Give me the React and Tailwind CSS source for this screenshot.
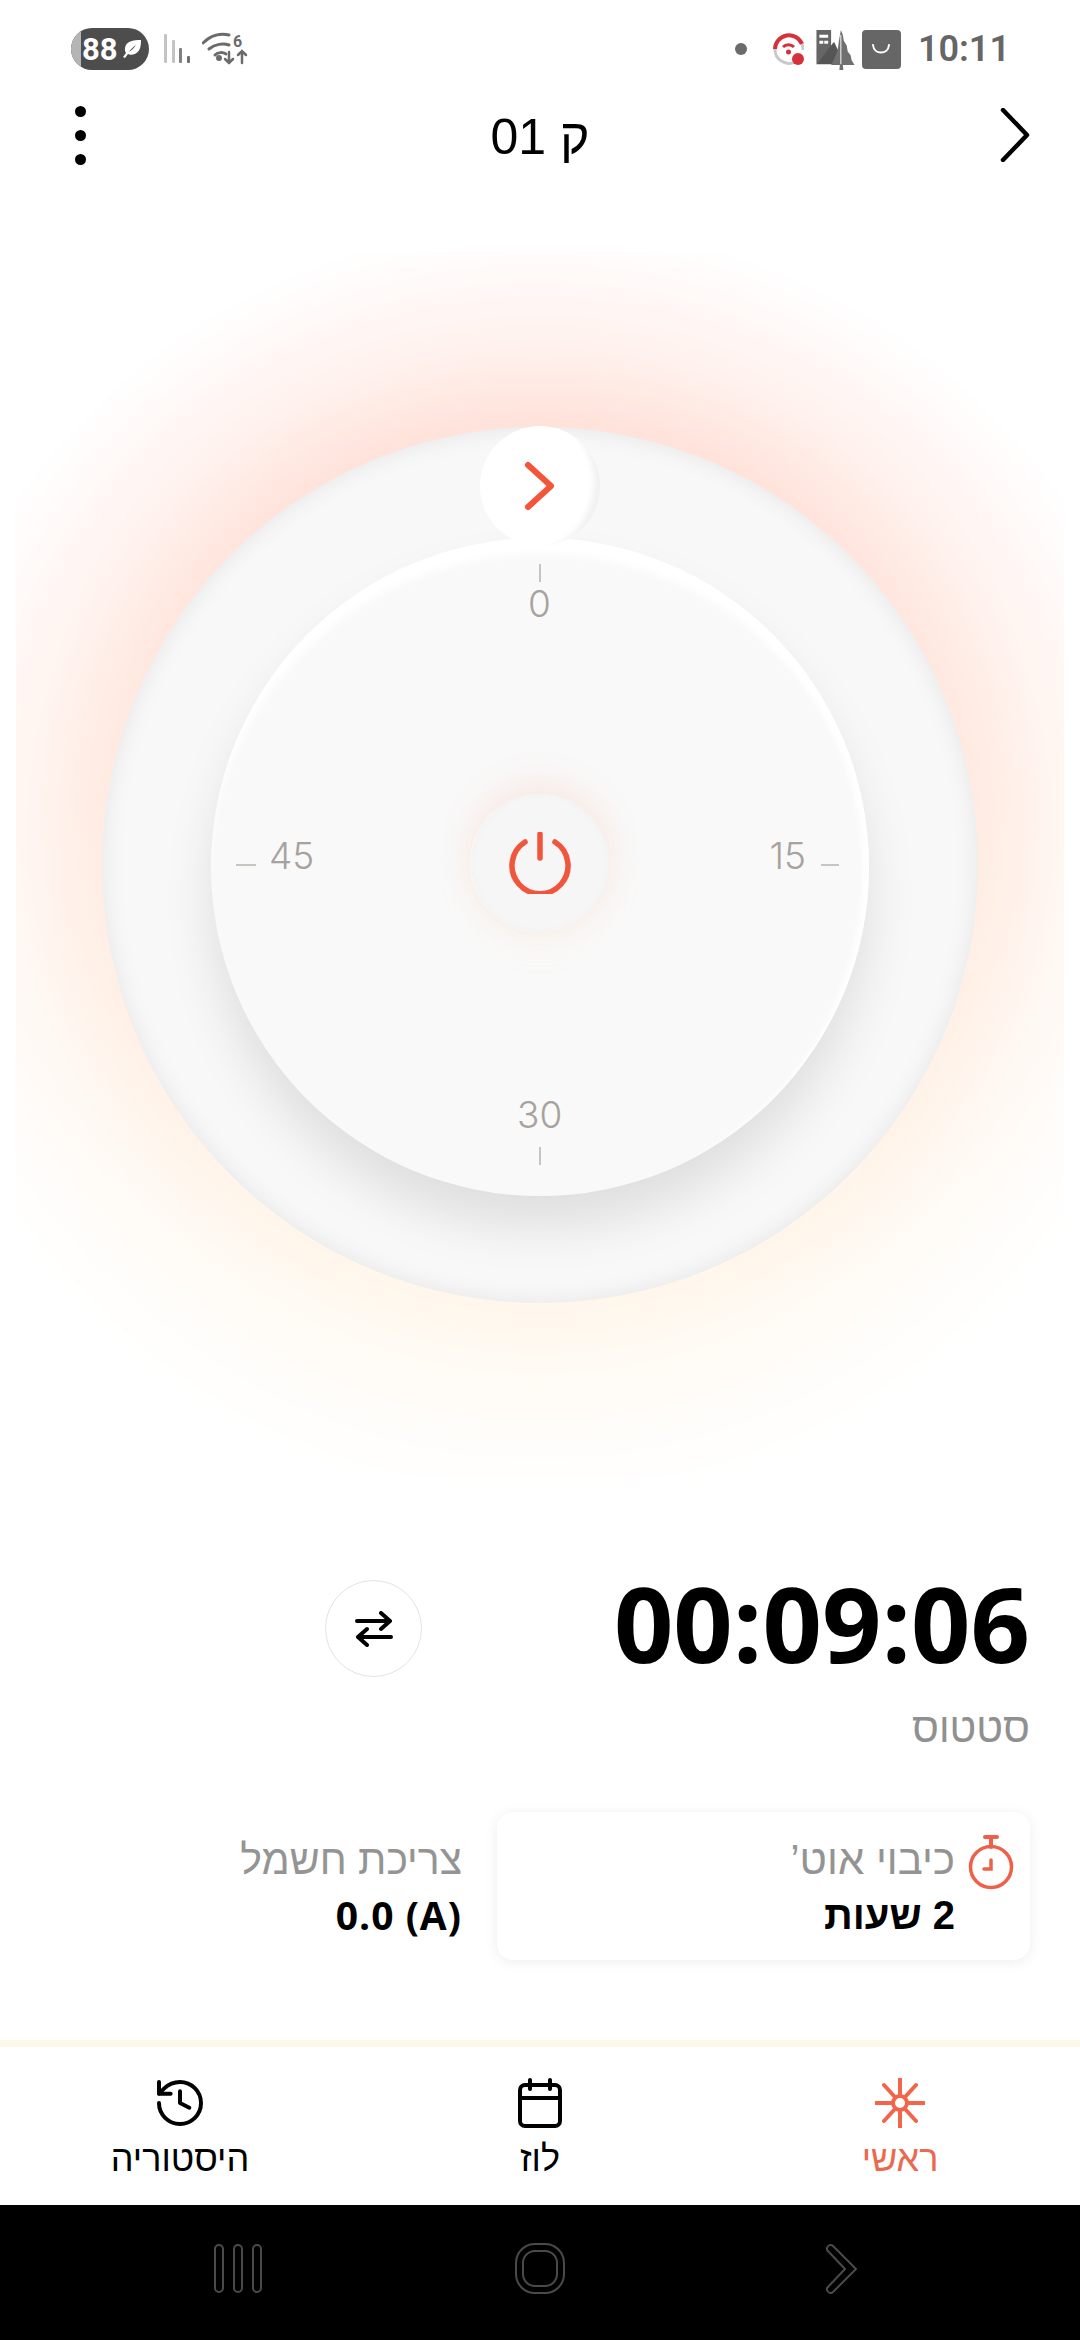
import { History } from 'lucide-react';

const hebrew = "font-['Liberation_Sans','DejaVu_Sans',sans-serif]";

function Leaf() {
  return (
    <svg viewBox="0 0 24 24" className="w-[24px] h-[24px]" fill="#fff">
      <path d="M21 3c-8 0-15 1-16 8-.4 2.500.4 4 1 5l-3 4 2 1 3-4c1 .6 3 1 5 .4C20 16 21 10 21 3zM9 15c2-3 4-5 7-7-2 3-4 5-7 7z" />
    </svg>
  );
}

function SignalBars() {
  return (
    <svg viewBox="0 0 26 30" className="w-[26px] h-[30px]">
      <rect x="0" y="0" width="3" height="29" rx="1" fill="#c4c4c4" />
      <rect x="8" y="6" width="3" height="23" rx="1" fill="#c4c4c4" />
      <rect x="15" y="14" width="3" height="15" rx="1" fill="#808080" />
      <rect x="23" y="22" width="3" height="7" rx="1" fill="#707070" />
    </svg>
  );
}

function WifiIcon() {
  return (
    <svg viewBox="0 0 50 34" className="w-[50px] h-[34px]" fill="none" stroke="#6b6b6b" strokeWidth="3" strokeLinecap="round">
      <path d="M1 11c8-8 18-10 26-8" />
      <path d="M7 17c6-5 14-6 20-4" />
      <path d="M13 23c3-3 8-3 11-1" />
      <circle cx="17" cy="26" r="1.500" fill="#6b6b6b" />
      <path d="M27 20v11m-4-4 4 4 4-4" strokeWidth="2.500" />
      <path d="M40 31V19m-4 4 4-4 4 4" strokeWidth="2.500" />
      <text x="31" y="15" fontSize="16" fontWeight="700" fill="#6b6b6b" stroke="none" fontFamily="Roboto">6</text>
    </svg>
  );
}

function RedWifi() {
  return (
    <svg viewBox="0 0 32 36" className="w-[32px] h-[36px]" fill="none">
      <path d="M3 18a14 14 0 0 1 27-5" stroke="#d6313a" strokeWidth="4" />
      <path d="M3 18a14 14 0 0 0 20 13" stroke="#c9c9c9" strokeWidth="3" />
      <path d="M30 13a14 14 0 0 1 1 6" stroke="#c9c9c9" strokeWidth="3" />
      <path d="M11 16c3-3 8-3 11 0" stroke="#d6313a" strokeWidth="3" />
      <circle cx="16.500" cy="21" r="2.500" fill="#d6313a" />
      <circle cx="26" cy="28" r="6" fill="#d6313a" />
    </svg>
  );
}

function CityTree() {
  return (
    <svg viewBox="0 0 40 42" className="w-[40px] h-[41px]">
      <path d="M1 1h15v18L1 36z" fill="#666" />
      <path d="M4 6h9v3H4zM4 12h4v3H4zM9 12h4v3H9z" fill="#fff" />
      <path d="M1 36 19 13l11 23z" fill="#555" />
      <path d="M26 1l2 5 1 6 3 5 1 6 3 4 1 5 3 5H28l1 9h-5l1-9H16l3-6 2-5 2-6 1-8z" fill="#6f6f6f" />
      <path d="M26 6v30" stroke="#fff" strokeWidth="1" />
    </svg>
  );
}

function BagIcon() {
  return (
    <div className="w-[39px] h-[39px] rounded-[4px] bg-[#666666] flex items-center justify-center">
      <svg viewBox="0 0 20 12" className="w-[20px] h-[12px]" fill="none" stroke="#fff" strokeWidth="2" strokeLinecap="round">
        <path d="M2 2c1 10 15 10 16 0" />
      </svg>
    </div>
  );
}

function StatusBar() {
  return (
    <div className="h-[80px] flex-none flex items-center justify-between pl-[71px] pr-[70px] pt-[18px]">
      <div className="flex items-center">
        <div className="relative w-[78px] h-[42px] rounded-full bg-[#4d4d4d] overflow-hidden flex items-center pl-[11px] gap-[2px]">
          <div className="absolute left-0 top-0 h-full w-[10px] bg-[#b5b5b5]" />
          <span className="relative font-['Roboto',sans-serif] font-bold text-[31px] leading-none text-white">88</span>
          <Leaf />
        </div>
        <div className="ml-[15px]"><SignalBars /></div>
        <div className="ml-[12px]"><WifiIcon /></div>
      </div>
      <div className="flex items-center">
        <div className="w-[12px] h-[12px] rounded-full bg-[#6b6b6b] mr-[25px]" />
        <RedWifi />
        <div className="ml-[11px]"><CityTree /></div>
        <div className="ml-[7px]"><BagIcon /></div>
        <span className="ml-[17px] font-['Roboto',sans-serif] font-semibold text-[36px] leading-none text-[#666666]">10:11</span>
      </div>
    </div>
  );
}

function Header() {
  return (
    <div className="relative h-[110px] flex-none flex items-center justify-between pl-[75px] pr-[50px]">
      <div className="flex flex-col gap-[13px]">
        <div className="w-[11px] h-[11px] rounded-full bg-black" />
        <div className="w-[11px] h-[11px] rounded-full bg-black" />
        <div className="w-[11px] h-[11px] rounded-full bg-black" />
      </div>
      <div dir="rtl" className={`${hebrew} absolute left-0 right-0 top-0 h-[114px] flex items-center justify-center text-[50px] leading-none text-black`}>
        ק 01
      </div>
      <svg viewBox="0 0 30 54" className="w-[30px] h-[54px]" fill="none" stroke="#000" strokeWidth="4.500" strokeLinecap="round" strokeLinejoin="round">
        <path d="M3 2l24 25L3 52" />
      </svg>
    </div>
  );
}

function Dial() {
  return (
    <div className="relative h-[1350px] flex-none">
      {/* glow behind the dial, clipped on its box like the real one */}
      <div className="absolute left-[16px] top-[62px] w-[1048px] h-[1226px] bg-[linear-gradient(180deg,#ffe2da_15%,#ffede4_50%,#fff7ec_85%)] [mask-image:radial-gradient(circle_at_50%_50%,#000_0,#000_440px,rgba(0,0,0,.75)_480px,rgba(0,0,0,.45)_524px,rgba(0,0,0,.33)_560px,rgba(0,0,0,.2)_590px,rgba(0,0,0,.1)_615px,rgba(0,0,0,.04)_630px,transparent_645px)]" />
      <div className="relative mx-auto mt-[237px] w-[876px] h-[876px] rounded-full bg-[#f8f8f8] shadow-[inset_0_0_24px_rgba(0,0,0,0.08)] flex items-center justify-center">
        <div className="absolute left-[378px] top-[-1px] z-10 w-[120px] h-[120px] rounded-full bg-white flex items-center justify-center shadow-[inset_-18px_-4px_6px_-12px_rgba(0,0,0,0.06)]">
          <svg viewBox="0 0 32 50" className="w-[32px] h-[50px]" fill="none" stroke="#f4553a" strokeWidth="6" strokeLinecap="round" strokeLinejoin="round">
            <path d="M4 4l23 21L4 46" />
          </svg>
        </div>
        <div className="relative mt-[3px] w-[658px] h-[658px] rounded-full bg-[#f9f9f9] shadow-[0_32px_50px_rgba(0,0,0,0.1),inset_0_20px_8px_-4px_#ffffff,inset_-8px_4px_6px_-2px_#ffffff] flex items-center justify-center text-[#a8a29e] font-['Inter',sans-serif] font-light text-[37px] leading-none">
          <div className="absolute left-[328px] top-[26px] w-[2px] h-[18px] bg-[#c8c4c0]" />
          <span className="absolute left-[317px] top-[47px]">0</span>
          <div className="absolute left-[328px] bottom-[31px] w-[2px] h-[18px] bg-[#c8c4c0]" />
          <span className="absolute left-[306px] top-[558px]">30</span>
          <div className="absolute left-[25px] top-[326px] w-[20px] h-[2px] bg-[#c8c4c0]" />
          <span className="absolute left-[58px] top-[299px]">45</span>
          <div className="absolute right-[30px] top-[326px] w-[18px] h-[2px] bg-[#c8c4c0]" />
          <span className="absolute right-[63px] top-[299px]">15</span>
          <div className="mt-[-8px] w-[138px] h-[138px] rounded-full bg-[#f6f6f6] shadow-[0_-12px_36px_rgba(244,120,90,0.12),0_12px_36px_rgba(250,205,150,0.1),-1px_0_0_#ffffff,inset_0_0_10px_rgba(0,0,0,0.025)] flex items-center justify-center">
            <svg viewBox="0 0 62 62" className="w-[62px] h-[62px]" fill="none" stroke="#f0563c" strokeWidth="5.500" strokeLinecap="round">
              <path d="M16 10a28 28 0 1 0 30 0" />
              <path d="M31 2v24" />
            </svg>
          </div>
        </div>
      </div>
    </div>
  );
}

function SwapIcon() {
  return (
    <svg viewBox="0 0 38 36" className="w-[38px] h-[36px]" fill="none" stroke="#000" strokeWidth="4" strokeLinecap="round" strokeLinejoin="round">
      <path d="M2 10h33M26 2l9 8-9 8" strokeLinejoin="round" />
      <path d="M36 26H3M12 18l-9 8 9 8" />
    </svg>
  );
}

function Stopwatch() {
  return (
    <svg viewBox="0 0 46 56" className="w-[46px] h-[56px]" fill="none" stroke="#ee6047" strokeWidth="3.500" strokeLinecap="round">
      <circle cx="23" cy="33" r="20.500" />
      <path d="M23 13V4M17 3h12" strokeWidth="4" />
      <path d="M23 26v9h-7" />
    </svg>
  );
}

function TimerInfo() {
  return (
    <div className="flex-1 pt-[40px] pr-[50px]">
      <div className="flex items-start pl-[325px]">
        <div className="w-[97px] h-[97px] rounded-full border border-[#e3e3e3] flex items-center justify-center">
          <SwapIcon />
        </div>
        <div className="ml-auto mt-[-6px] font-['Open_Sans',sans-serif] font-bold text-[104px] leading-[97px] text-black">00:09:06</div>
      </div>
      <div dir="rtl" className={`${hebrew} mt-[29px] text-[41px] leading-[44px] text-[#909090]`}>סטטוס</div>
      <div className="mt-[62px] flex items-center pl-[240px]">
        <div dir="rtl" className={`${hebrew} w-[222px] flex-none`}>
          <div className="text-[41px] leading-[44px] text-[#949494] whitespace-nowrap">צריכת חשמל</div>
          <div dir="ltr" className="mt-[13px] text-right font-['Open_Sans',sans-serif] font-bold text-[39px] tracking-[1px] leading-[40px] text-black">0.0 (A)</div>
        </div>
        <div dir="rtl" className="ml-[35px] flex-1 h-[148px] rounded-[16px] bg-white shadow-[0_2px_14px_rgba(0,0,0,0.07)] flex items-start pr-[16px] pt-[22px] gap-[13px]">
          <Stopwatch />
          <div className={hebrew}>
            <div className="mt-[4px] text-[42px] leading-[44px] text-[#949494]">כיבוי אוט’</div>
            <div className="mt-[13px] font-bold text-[40px] leading-[40px] text-black">2 שעות</div>
          </div>
        </div>
      </div>
    </div>
  );
}

function NavItem({ icon, label, color }) {
  return (
    <div className="flex flex-col items-center">
      <div className="h-[52px] flex items-center justify-center">{icon}</div>
      <span dir="rtl" className={`${hebrew} mt-[11px] text-[36px] leading-[38px] ${color}`}>{label}</span>
    </div>
  );
}

function CalendarIcon() {
  return (
    <svg viewBox="0 0 44 50" className="w-[44px] h-[50px]" fill="none" stroke="#000" strokeWidth="4" strokeLinecap="round">
      <rect x="2" y="7" width="40" height="41" rx="5" />
      <path d="M2 20h40M12 2v9M32 2v9" />
    </svg>
  );
}

function SunIcon() {
  return (
    <svg viewBox="0 0 50 50" className="w-[50px] h-[50px]" fill="none" stroke="#f2654b" strokeWidth="4" strokeLinecap="round">
      <circle cx="25" cy="25" r="7" />
      <path d="M25 1v15M25 34v15M1 25h15M34 25h15M9 7l10 11M31 32l10 11M41 7 31 18M19 32 9 43" />
    </svg>
  );
}

function BottomNav() {
  return (
    <div className="flex-none h-[165px] border-t-[7px] border-[#fdf9ea] grid grid-cols-3 pt-[30px] bg-white">
      <NavItem label="היסטוריה" color="text-black" icon={<History className="w-[56px] h-[56px]" strokeWidth={1.7} />} />
      <NavItem label="לוז" color="text-black" icon={<CalendarIcon />} />
      <NavItem label="ראשי" color="text-[#ea6a50]" icon={<SunIcon />} />
    </div>
  );
}

function SoftKeys() {
  return (
    <div className="flex-none h-[135px] bg-black grid grid-cols-[302px_302px_302px] justify-center items-center pb-[8px]">
      <div className="flex justify-center gap-[9px]">
        <div className="w-[10px] h-[49px] rounded-full border-2 border-[#4a4a4a]" />
        <div className="w-[10px] h-[49px] rounded-full border-2 border-[#4a4a4a]" />
        <div className="w-[10px] h-[49px] rounded-full border-2 border-[#4a4a4a]" />
      </div>
      <div className="flex justify-center">
        <div className="w-[50px] h-[51px] rounded-[20px] border-2 border-[#4a4a4a] p-[5px]">
          <div className="w-full h-full rounded-[13px] border-2 border-[#4a4a4a]" />
        </div>
      </div>
      <div className="flex justify-center">
        <svg viewBox="0 0 36 52" className="w-[36px] h-[52px]" fill="none" stroke="#4a4a4a" strokeWidth="2" strokeLinejoin="round">
          <path d="M3 5c1-3 4-4 6-2l23 23L9 49c-2 2-5 1-6-2v-2l18-19L3 7z" />
        </svg>
      </div>
    </div>
  );
}

export default function App() {
  return (
    <div className="w-[1080px] h-[2340px] overflow-hidden bg-white flex flex-col">
      <StatusBar />
      <Header />
      <Dial />
      <TimerInfo />
      <BottomNav />
      <SoftKeys />
    </div>
  );
}
